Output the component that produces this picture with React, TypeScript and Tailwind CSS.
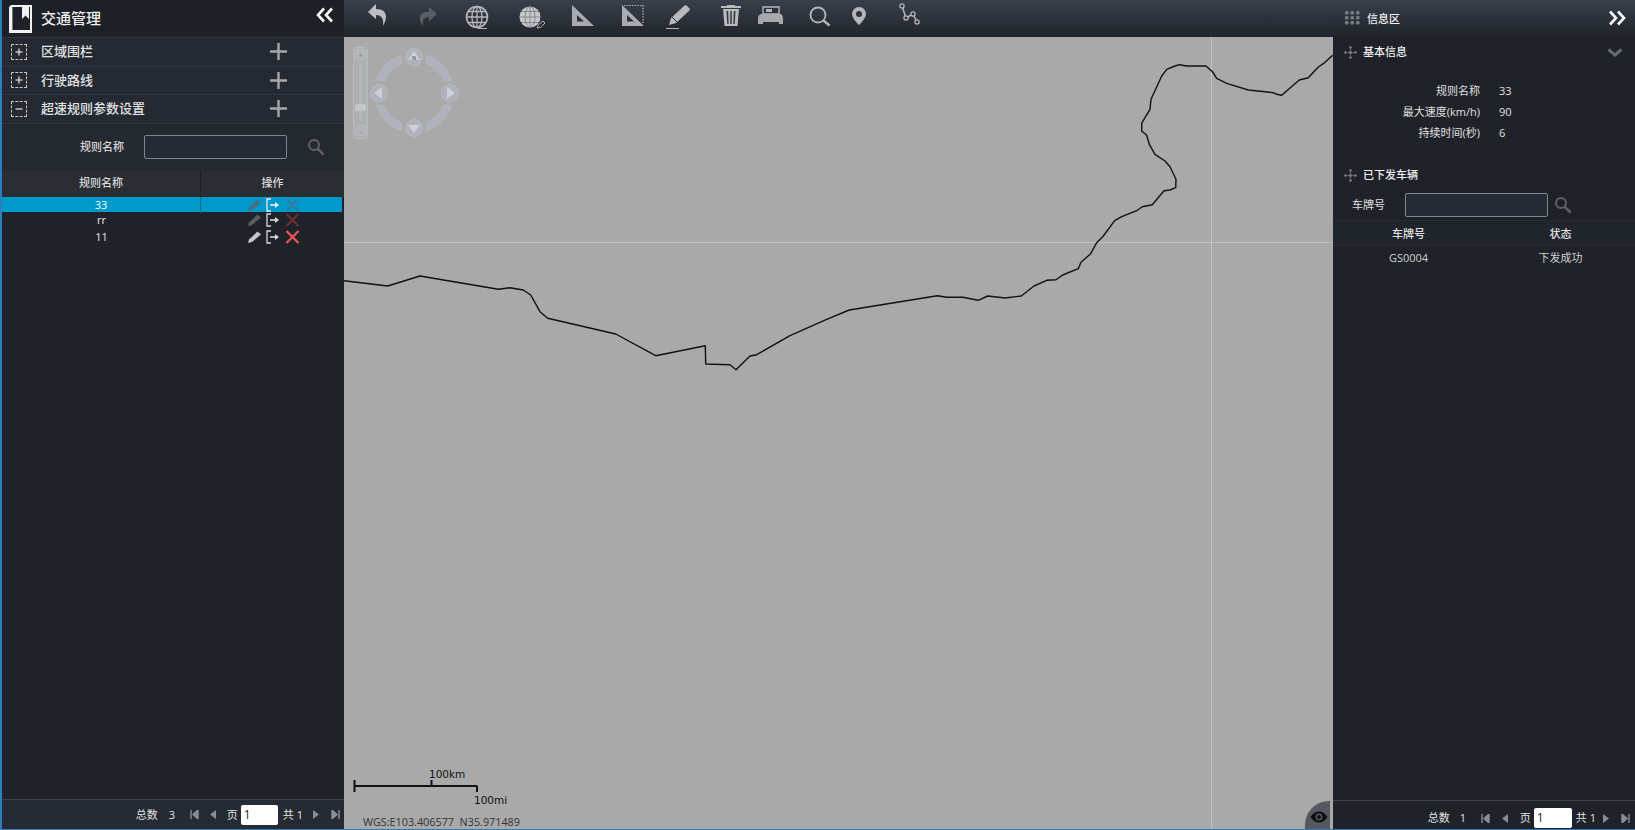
import React from "react";

const G = "#b4b7ba";

function Book() {
  return (
    <svg width="23" height="28" viewBox="0 0 23 28" className="shrink-0">
      <path d="M0 2 L2 0 H23 V28 H0 Z" fill="#f2f2f2" />
      <path d="M3 2 H21 V25 H3 Z" fill="#1e2228" />
      <path d="M3 2 H4 V25 H3 Z" fill="#777" />
      <path d="M13 1 H20 V14 L16.5 10.5 L13 14 Z" fill="#f2f2f2" />
    </svg>
  );
}

function DoubleChevron({ right }: { right?: boolean }) {
  return (
    <svg width="18" height="16" viewBox="0 0 18 16" className={right ? "rotate-180" : ""}>
      <path d="M8 1.5 L2 8 L8 14.5" fill="none" stroke="#f5f5f5" strokeWidth="2.6" />
      <path d="M16 1.5 L10 8 L16 14.5" fill="none" stroke="#f5f5f5" strokeWidth="2.6" />
    </svg>
  );
}

function DashBox({ minus }: { minus?: boolean }) {
  return (
    <div className="w-[16px] h-[16px] border border-dashed border-[#c4c4c4] flex items-center justify-center shrink-0">
      <svg width="8" height="8" viewBox="0 0 8 8">
        <path d="M0.5 4 H7.5" stroke="#e4e4e4" strokeWidth="1.2" />
        {!minus && <path d="M4 0.5 V7.5" stroke="#e4e4e4" strokeWidth="1.2" />}
      </svg>
    </div>
  );
}

function BigPlus() {
  return (
    <svg width="17" height="17" viewBox="0 0 17 17">
      <path d="M0 8.5 H17 M8.5 0 V17" stroke="#a6a8aa" strokeWidth="2.4" />
    </svg>
  );
}

function SearchIcon({ color = "#5e6266" }: { color?: string }) {
  return (
    <svg width="18" height="18" viewBox="0 0 18 18">
      <circle cx="7" cy="7" r="5" fill="none" stroke={color} strokeWidth="2" />
      <path d="M10.8 10.8 L16.5 16.5" stroke={color} strokeWidth="2.6" />
    </svg>
  );
}

function Move() {
  return (
    <svg width="13" height="13" viewBox="0 0 13 13" className="shrink-0">
      <g fill="#7b8087">
        <circle cx="6.5" cy="1.5" r="1.3" />
        <circle cx="6.5" cy="6.5" r="1.6" />
        <circle cx="6.5" cy="11.5" r="1.3" />
        <circle cx="1.5" cy="6.5" r="1.3" />
        <circle cx="11.5" cy="6.5" r="1.3" />
        <circle cx="4" cy="6.5" r="0.7" />
        <circle cx="9" cy="6.5" r="0.7" />
        <circle cx="6.5" cy="4" r="0.7" />
        <circle cx="6.5" cy="9" r="0.7" />
      </g>
    </svg>
  );
}

function Actions({ pencil, arrow, cross }: { pencil: string; arrow: string; cross: string }) {
  return (
    <div className="flex items-center pl-[46px] h-full">
      <svg width="15" height="14" viewBox="0 0 15 14">
        <path d="M1 13 L2 9.5 L10.5 1.5 L14 4.5 L5 12 Z" fill={pencil} />
      </svg>
      <svg width="14" height="14" viewBox="0 0 14 14" className="ml-[4px]">
        <path d="M5 1 H1 V13 H5" fill="none" stroke={arrow} strokeWidth="1.3" />
        <path d="M4 7 H10" stroke={arrow} strokeWidth="1.6" />
        <path d="M9 4 L13 7 L9 10 Z" fill={arrow} />
      </svg>
      <svg width="15" height="14" viewBox="0 0 15 14" className="ml-[5px]">
        <path d="M1.5 1 L13.5 13 M13.5 1 L1.5 13" stroke={cross} strokeWidth="2.2" />
      </svg>
    </div>
  );
}

type PagerClasses = { total: string; first: string; prev: string; page: string; input: string; gong: string; next: string };

const PAGER_LEFT: PagerClasses = {
  total: "ml-[11px] w-[8px]",
  first: "ml-[13px]",
  prev: "ml-[11px]",
  page: "ml-[11px]",
  input: "ml-[3px] w-[37px]",
  gong: "ml-[5px]",
  next: "ml-[10px]",
};

const PAGER_RIGHT: PagerClasses = {
  total: "ml-[10px] w-[8px]",
  first: "ml-[13px]",
  prev: "ml-[12px]",
  page: "ml-[12px]",
  input: "ml-[3px] w-[38px]",
  gong: "ml-[4px]",
  next: "ml-[7px]",
};

function Pager({ total, m, color = "#8a8e92" }: { total: string; m: PagerClasses; color?: string }) {
  return (
    <div className="flex items-center text-[11px] text-[#e2e2e2]">
      <span className="pt-[1px]">总数</span>
      <span className={`${m.total} pt-[1px]`}>{total}</span>
      <svg width="9" height="9" viewBox="0 0 9 9" className={m.first}>
        <path d="M1 0 V9 M8 0 V9 L3 4.5 Z" stroke={color} fill={color} strokeWidth="1.4" />
      </svg>
      <svg width="6" height="9" viewBox="0 0 6 9" className={m.prev}>
        <path d="M6 0 V9 L0 4.5 Z" fill={color} />
      </svg>
      <span className={`${m.page} pt-[1px]`}>页</span>
      <div className={`${m.input} h-[20px] bg-white rounded-[2px] text-[#222] text-[12px] pl-[3px] leading-[20px]`}>1</div>
      <span className={`${m.gong} pt-[1px]`}>共</span>
      <span className="ml-[3px] pt-[1px]">1</span>
      <svg width="6" height="9" viewBox="0 0 6 9" className={m.next}>
        <path d="M0 0 V9 L6 4.5 Z" fill={color} />
      </svg>
      <svg width="9" height="9" viewBox="0 0 9 9" className="ml-[12px]">
        <path d="M8 0 V9 M1 0 V9 L6 4.5 Z" stroke={color} fill={color} strokeWidth="1.4" />
      </svg>
    </div>
  );
}

function Section({ title, minus }: { title: string; minus?: boolean }) {
  return (
    <div className="h-[28.5px] flex items-center pl-[9px] bg-[#252a32] border-b border-[#323843] shrink-0">
      <DashBox minus={minus} />
      <span className="ml-[14px] text-[13px] font-medium text-[#e0e2e4] w-[229px]">{title}</span>
      <BigPlus />
    </div>
  );
}

function ToolSvg({ className, children }: { className: string; children: React.ReactNode }) {
  return (
    <svg width="30" height="37" viewBox="0 0 30 37" className={className}>
      {children}
    </svg>
  );
}

function Toolbar() {
  return (
    <div className="h-[37px] flex items-start pl-[19px] bg-gradient-to-b from-[#3a404b] to-[#20242b] shrink-0">
      <ToolSvg className="shrink-0">
        <path d="M13 4 L5 12 L13 19 V15 C19 15 21 19 20 26 C24 20 26 9 13 9 Z" fill="#bcbfc2" />
      </ToolSvg>
      <ToolSvg className="shrink-0 ml-[19px]">
        <path d="M17 7 L25 14 L17 21 V17 C12 17 10 20 11 26 C7 21 5 11 17 12 Z" fill="#5a5e63" />
      </ToolSvg>
      <ToolSvg className="shrink-0 ml-[20px]">
        <circle cx="15" cy="17" r="10.5" fill="none" stroke={G} strokeWidth="1.6" />
        <ellipse cx="15" cy="17" rx="5" ry="10.5" fill="none" stroke={G} strokeWidth="1.3" />
        <path d="M15 6.5 V27.5 M4.5 17 H25.5 M6 11.5 H24 M6 22.5 H24" stroke={G} strokeWidth="1.3" />
        <path d="M16 28.5 H25" stroke={G} strokeWidth="1" />
      </ToolSvg>
      <ToolSvg className="shrink-0 ml-[25px]">
        <circle cx="13" cy="17" r="10.5" fill="#c6c8ca" />
        <path d="M13 6.5 V27.5 M2.5 17 H23.5 M4 11.5 H22 M4 22.5 H22" stroke="#767a80" strokeWidth="0.8" />
        <ellipse cx="13" cy="17" rx="5" ry="10.5" fill="none" stroke="#767a80" strokeWidth="0.8" />
        <path d="M20 28 L21.5 24.5 L26 21 L28 23 L23.5 27.5 Z" fill="#2b2f36" stroke={G} strokeWidth="1" />
      </ToolSvg>
      <ToolSvg className="shrink-0 ml-[20px]">
        <path fillRule="evenodd" d="M5 5 L27 26 H5 Z M10 15 V21.5 H17 Z" fill="#a9acaf" />
      </ToolSvg>
      <ToolSvg className="shrink-0 ml-[20px]">
        <path fillRule="evenodd" d="M5 5 L27 26 H5 Z M10 15 V21.5 H17 Z" fill="#a9acaf" />
        <path d="M7 5.5 H26 V24" fill="none" stroke={G} strokeWidth="1.2" strokeDasharray="1.5 1.2" />
      </ToolSvg>
      <ToolSvg className="shrink-0 ml-[16px]">
        <path d="M6 25 L8 18 L21 6 L23 5 L27 9 L26 11 L13 23 Z" fill="#b8babc" />
        <path d="M9 17 L14 22" stroke="#2b3038" strokeWidth="1" />
        <path d="M3 28.5 H16" stroke={G} strokeWidth="1" />
      </ToolSvg>
      <ToolSvg className="shrink-0 ml-[23px]">
        <path d="M5 6 H25 V8 H5 Z M11 5 H19 V6 H11 Z" fill="#b8babc" />
        <path fillRule="evenodd" d="M7 9 H23 L21.5 26 H8.5 Z M10.5 11 L11.3 24 H12.6 L12.2 11 Z M14.3 11 V24 H15.7 V11 Z M17.8 11 L17.4 24 H18.7 L19.5 11 Z" fill="#b8babc" />
      </ToolSvg>
      <ToolSvg className="shrink-0 ml-[9px]">
        <path d="M8 7 H24 V14 H8 Z" fill="#2d323a" stroke="#b4b7ba" strokeWidth="1.4" />
        <path d="M11 9 H17 V12 H11 Z" fill="#b4b7ba" />
        <path d="M3 19 C3 15 5 14 7 14 H25 C27 14 28 16 28 19 V24 H24 V22 H8 V24 H3 Z" fill="#a6a9ac" />
      </ToolSvg>
      <ToolSvg className="shrink-0 ml-[20px]">
        <circle cx="13" cy="15" r="7.5" fill="none" stroke={G} strokeWidth="1.8" />
        <path d="M18.5 20.5 L24.5 25.5" stroke={G} strokeWidth="2.4" />
      </ToolSvg>
      <ToolSvg className="shrink-0 ml-[9px]">
        <path fillRule="evenodd" d="M15 7 A7 7 0 0 0 8 14 C8 18.5 15 25 15 25 C15 25 22 18.5 22 14 A7 7 0 0 0 15 7 Z M15 11 A3 3 0 1 1 15 17 A3 3 0 0 1 15 11 Z" fill="#b4b7ba" />
      </ToolSvg>
      <ToolSvg className="shrink-0 ml-[21px]">
        <path d="M7 6 L11 18 M11 18 L18 14 M18 14 L22 22" stroke={G} strokeWidth="1.5" />
        <circle cx="7" cy="6" r="2.1" fill="#2c3038" stroke={G} strokeWidth="1.3" />
        <circle cx="11" cy="18" r="2.1" fill="#2c3038" stroke={G} strokeWidth="1.3" />
        <circle cx="18" cy="14" r="2.1" fill="#2c3038" stroke={G} strokeWidth="1.3" />
        <circle cx="22" cy="22" r="2.1" fill="#2c3038" stroke={G} strokeWidth="1.3" />
      </ToolSvg>
    </div>
  );
}

const BORDER =
  "344,280.7 387.7,286 420,276 498.3,289.3 510,287.7 523.3,290 530.7,295 540,311.7 547.7,318.3 615.7,334 655.7,355.7 705.3,345.7 705.7,364 730,364.7 736,369.7 750,356 756.7,354.7 790,335.7 826.7,319.3 849.3,310 937.3,295.7 946.7,297.3 962.7,297.3 978.3,300.3 987.7,296 1005,298 1021.3,296 1034,286 1046.7,280.3 1056,279.7 1062.7,275 1078.3,268.7 1081,262.3 1090.7,253.7 1096.7,242.7 1103.3,236 1114.7,220.7 1121.7,216.7 1136.7,210.7 1142.3,206.7 1152.3,204.7 1164,190.7 1170,190 1175.7,187.7 1176,179.3 1170,166.7 1165,161 1155,154.3 1149.3,144.3 1146.7,135.3 1141.7,131 1141.7,123.3 1145,117.7 1150,109.3 1151,99.3 1161.7,76 1166.7,69.3 1175,66 1179.3,64.7 1186.7,66 1206,66 1212.7,72 1216.7,78.3 1226.7,83.3 1248.3,90 1273.3,92.7 1276.7,94.3 1281.7,95.3 1299.3,80 1308.3,77.7 1318.3,67 1323.3,63.7 1332.7,55.3";

function NavControl() {
  const fill = "#aeb2bd";
  const edge = "#b9babd";
  const glyph = "#cdd0d6";
  const arc = "M12.5 -38 A40 40 0 0 1 38 -12.5 H29.5 A32 32 0 0 0 12.5 -29.5 Z";
  return (
    <svg width="112" height="100" viewBox="0 0 112 100" className="absolute left-[9px] top-[9px]">
      {/* zoom slider */}
      <rect x="0.5" y="1.5" width="14" height="91" rx="2.5" fill="#adafb4" stroke={edge} />
      <rect x="2.5" y="3.5" width="10" height="10" rx="2" fill="#b2b4b9" stroke={edge} />
      <text x="7.5" y="11.5" fontSize="8" textAnchor="middle" fill="#7d7f85">+</text>
      <rect x="6" y="17" width="3" height="58" fill="#b4b6ba" />
      <rect x="2" y="58" width="11" height="7" rx="1" fill="#c4c5c6" />
      <rect x="2.5" y="79.5" width="10" height="10" rx="2" fill="#b2b4b9" stroke={edge} />
      <text x="7.5" y="87.5" fontSize="8" textAnchor="middle" fill="#7d7f85">-</text>
      {/* ring */}
      <g transform="translate(61,47)" fill={fill} stroke={edge} strokeWidth="0.6">
        <path d={arc} />
        <path d={arc} transform="rotate(90)" />
        <path d={arc} transform="rotate(180)" />
        <path d={arc} transform="rotate(270)" />
      </g>
      <g fill={fill} stroke={edge}>
        <circle cx="61" cy="11" r="8.5" />
        <circle cx="61" cy="82" r="8.5" />
        <circle cx="26" cy="47" r="8.5" />
        <circle cx="97" cy="47" r="8.5" />
      </g>
      <g fill={glyph}>
        <path d="M61 5 L67 14 H55 Z" />
        <path d="M55 79 H67 L61 87 Z" />
        <path d="M29 41 V53 L21 47 Z" />
        <path d="M94 41 V53 L102 47 Z" />
      </g>
      <text x="61" y="13.5" fontSize="5" fontWeight="700" textAnchor="middle" fill="#6c6f75">N</text>
    </svg>
  );
}

function MapArea() {
  return (
    <div className="flex-1 relative bg-[#a9a9a9] overflow-hidden">
      <svg width="989" height="793" viewBox="344 37 989 793" className="absolute left-0 top-0">
        <path d="M344 242.5 H1333" stroke="#c2c2c2" strokeWidth="1" />
        <path d="M1211.5 37 V830" stroke="#c2c2c2" strokeWidth="1" />
        <polyline points={BORDER} fill="none" stroke="#111" strokeWidth="1.4" strokeLinejoin="round" />
        <path d="M354.5 780 V792 M354 786 H477.5 M431.5 780 V785 M477 786 V792" stroke="#111" strokeWidth="2" fill="none" />
        <rect x="1326" y="42" width="2" height="5" fill="#a4a8b4" />
      </svg>
      <NavControl />
      <span className="absolute left-[85px] bottom-[48px] text-[10.5px] leading-[14px] text-[#111] font-['DejaVu_Sans',sans-serif]">100km</span>
      <span className="absolute left-[130px] bottom-[22px] text-[10.5px] leading-[14px] text-[#111] font-['DejaVu_Sans',sans-serif]">100mi</span>
      <span className="absolute left-[19px] bottom-0 text-[10.8px] leading-[14px] text-[#333] whitespace-pre">WGS:E103.406577  N35.971489</span>
      <div className="absolute right-[3px] bottom-0 w-[25px] h-[28px] bg-[#55585e] rounded-tl-[24px] flex items-center justify-center pt-[3px] pl-[2px]">
        <svg width="18" height="12" viewBox="0 0 18 12">
          <path fillRule="evenodd" d="M0.5 6 C3 2 6 0.5 9 0.5 C12 0.5 15 2 17.5 6 C15 10 12 11.5 9 11.5 C6 11.5 3 10 0.5 6 Z M9 2.5 A3.5 3.5 0 1 0 9 9.5 A3.5 3.5 0 1 0 9 2.5 Z" fill="#0e0f11" />
          <circle cx="9" cy="6" r="2" fill="#0e0f11" />
        </svg>
      </div>
    </div>
  );
}

function LeftPanel() {
  return (
    <div className="w-[344px] shrink-0 flex flex-col bg-[#1f2329] border-l-2 border-[#2a7fc0]">
      <div className="h-[38px] flex items-center pl-[7px] pr-[10px] bg-[#1d2127] border-b border-[#323843] shrink-0">
        <Book />
        <span className="ml-[9px] text-[15px] font-medium text-[#f0f0f0] flex-1">交通管理</span>
        <div className="mb-[8px]"><DoubleChevron /></div>
      </div>
      <Section title="区域围栏" />
      <Section title="行驶路线" />
      <Section title="超速规则参数设置" minus />
      <div className="h-[47px] flex items-center bg-[#242930] shrink-0">
        <span className="ml-[78px] w-[64px] text-[11px] font-medium text-[#d8d8d8]">规则名称</span>
        <div className="w-[143px] h-[24px] border border-[#7c8792] bg-[#252b33] rounded-[2px]" />
        <div className="ml-[20px]"><SearchIcon /></div>
      </div>
      <div className="h-[26px] grid grid-cols-[199px_1fr] bg-[#2a2e33] text-[11px] font-medium text-[#d8d8d8] shrink-0">
        <div className="flex items-center justify-center border-r border-[#1d2025]">规则名称</div>
        <div className="flex items-center justify-center">操作</div>
      </div>
      <div className="h-[15px] grid grid-cols-[199px_1fr] bg-[#0099cc] text-[11px] text-white mr-[2px] shrink-0">
        <div className="flex items-center justify-center border-r border-[#1a6a8c]">33</div>
        <Actions pencil="#4b6c7f" arrow="#e6eef2" cross="#3a78a0" />
      </div>
      <div className="h-[17px] grid grid-cols-[199px_1fr] text-[11px] text-[#e6e6e6] mr-[2px] shrink-0">
        <div className="flex items-center justify-center">rr</div>
        <Actions pencil="#5a5d61" arrow="#d8d8d8" cross="#6a2f33" />
      </div>
      <div className="h-[16px] grid grid-cols-[199px_1fr] text-[11px] text-[#e6e6e6] mr-[2px] shrink-0">
        <div className="flex items-center justify-center">11</div>
        <Actions pencil="#c6c8ca" arrow="#d8d8d8" cross="#ee5550" />
      </div>
      <div className="flex-1" />
      <div className="h-[30px] flex items-center justify-end pr-[4px] bg-[#262b33] border-t border-[#3c4450] shrink-0">
        <Pager total="3" m={PAGER_LEFT} />
      </div>
    </div>
  );
}

function RightPanel() {
  return (
    <div className="w-[302px] shrink-0 flex flex-col bg-[#1f2329] text-[11px] text-[#e0e0e0]">
      <div className="h-[36px] flex items-center pl-[12px] pr-[9px] bg-gradient-to-b from-[#3a404b] to-[#20242b] shrink-0">
        <svg width="15" height="14" viewBox="0 0 15 14" className="shrink-0">
          <g fill="#777c83">
            <rect x="0" y="0" width="3.5" height="3.5" rx="1.2" />
            <rect x="5.5" y="0" width="3.5" height="3.5" rx="1.2" />
            <rect x="11" y="0" width="3.5" height="3.5" rx="1.2" />
            <rect x="0" y="5" width="3.5" height="3.5" rx="1.2" />
            <rect x="5.5" y="5" width="3.5" height="3.5" rx="1.2" />
            <rect x="11" y="5" width="3.5" height="3.5" rx="1.2" />
            <rect x="0" y="10" width="3.5" height="3.5" rx="1.2" />
            <rect x="5.5" y="10" width="3.5" height="3.5" rx="1.2" />
            <rect x="11" y="10" width="3.5" height="3.5" rx="1.2" />
          </g>
        </svg>
        <span className="ml-[7px] pt-[2px] flex-1 font-medium text-[#f0f0f0]">信息区</span>
        <DoubleChevron right />
      </div>
      <div className="h-[32px] flex items-center pl-[11px] pr-[12px] shrink-0">
        <Move />
        <span className="ml-[6px] flex-1 font-medium text-[#f0f0f0]">基本信息</span>
        <svg width="16" height="9" viewBox="0 0 16 9">
          <path d="M1.5 1.5 L8 7 L14.5 1.5" fill="none" stroke="#626a74" strokeWidth="3" />
        </svg>
      </div>
      <div className="pt-[13px] shrink-0">
        <div className="h-[21px] flex items-center">
          <span className="w-[147px] text-right">规则名称</span>
          <span className="ml-[19px]">33</span>
        </div>
        <div className="h-[21px] flex items-center">
          <span className="w-[147px] text-right">最大速度(km/h)</span>
          <span className="ml-[19px]">90</span>
        </div>
        <div className="h-[21px] flex items-center">
          <span className="w-[147px] text-right">持续时间(秒)</span>
          <span className="ml-[19px]">6</span>
        </div>
      </div>
      <div className="mt-[15px] h-[32px] flex items-center pl-[11px] shrink-0">
        <Move />
        <span className="ml-[6px] font-medium text-[#f0f0f0]">已下发车辆</span>
      </div>
      <div className="h-[28px] flex items-center pl-[19px] shrink-0">
        <span className="w-[53px]">车牌号</span>
        <div className="w-[143px] h-[24px] border border-[#7c8792] bg-[#252b33] rounded-[2px]" />
        <div className="ml-[6px]"><SearchIcon /></div>
      </div>
      <div className="mt-[1px] h-[26px] pt-[2px] grid grid-cols-[151px_1fr] items-center bg-[#20252b] border-y border-[#262b32] font-medium shrink-0">
        <div className="text-center">车牌号</div>
        <div className="text-center pl-[2px]">状态</div>
      </div>
      <div className="h-[24px] grid grid-cols-[151px_1fr] items-center text-[#cfd0d2] shrink-0">
        <div className="text-center">GS0004</div>
        <div className="text-center pl-[2px]">下发成功</div>
      </div>
      <div className="flex-1" />
      <div className="h-[29px] pt-[6px] flex items-center justify-end pr-[5px] border-t border-[#3c4450] shrink-0">
        <Pager total="1" m={PAGER_RIGHT} />
      </div>
    </div>
  );
}

export default function App() {
  return (
    <div className="w-[1635px] h-[830px] overflow-hidden flex border-b border-[#2a7fc0] font-['Open_Sans','Noto_Sans_CJK_SC',sans-serif]">
      <LeftPanel />
      <div className="flex-1 flex flex-col min-w-0">
        <Toolbar />
        <MapArea />
      </div>
      <RightPanel />
    </div>
  );
}
